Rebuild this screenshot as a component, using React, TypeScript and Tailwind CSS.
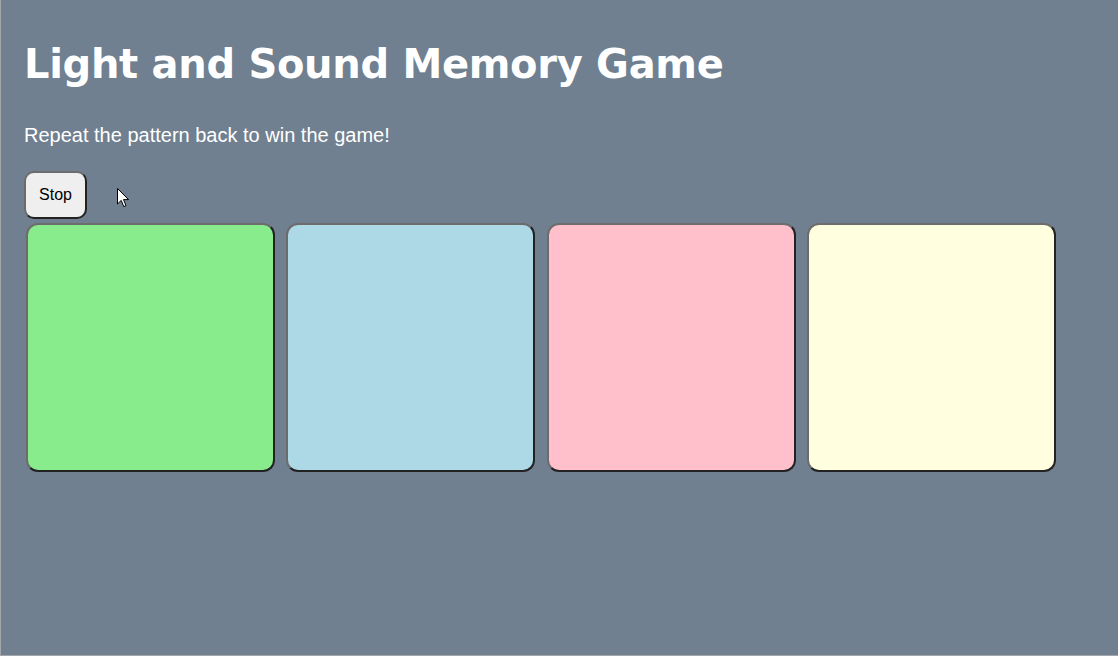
import React from "react";

const pads = [
  { id: 1, color: "bg-[#89ec8c]" },
  { id: 2, color: "bg-[#add8e6]" },
  { id: 3, color: "bg-[#ffc0cb]" },
  { id: 4, color: "bg-[#ffffe0]" },
];

function Cursor() {
  return (
    <svg
      className="absolute left-[116px] top-[188px]"
      width="13"
      height="20"
      viewBox="0 0 13 20"
    >
      <path
        d="M0.5 0.5 L0.5 16 L4.2 12.4 L6.8 18.6 L9 17.7 L6.5 11.6 L11.6 11.6 Z"
        fill="#fff"
        stroke="#000"
        strokeWidth="1"
        strokeLinejoin="miter"
      />
    </svg>
  );
}

export default function App() {
  return (
    <div className="relative h-[656px] w-[1118px] overflow-hidden bg-[#708090] border-l border-b border-[#a3a7ab]">
      <div className="pl-[23px] pt-[40px]">
        <h1
          className="text-[40px] leading-[48px] font-bold text-white tracking-[-0.3px]"
          style={{ fontFamily: '"DejaVu Sans", Verdana, sans-serif' }}
        >
          Light and Sound Memory Game
        </h1>
        <p
          className="mt-[36px] text-[20px] leading-[23px] text-white"
          style={{ fontFamily: '"Liberation Sans", Arial, sans-serif' }}
        >
          Repeat the pattern back to win the game!
        </p>
        <button
          className="mt-[24px] block w-[63px] h-[48px] rounded-[10px] bg-[#efefef] border-2 border-t-[#6c6c6c] border-l-[#6c6c6c] border-r-[#222] border-b-[#222] text-[16px] text-black"
          style={{ fontFamily: '"Liberation Sans", Arial, sans-serif' }}
        >
          Stop
        </button>
        <div className="mt-[4px] ml-[2px] flex gap-[11.3px]">
          {pads.map((p) => (
            <button
              key={p.id}
              className={`w-[249px] h-[249px] rounded-[12px] border-2 border-t-[#6c6c6c] border-l-[#6c6c6c] border-r-[#222] border-b-[#222] ${p.color}`}
            />
          ))}
        </div>
      </div>
      <Cursor />
    </div>
  );
}
